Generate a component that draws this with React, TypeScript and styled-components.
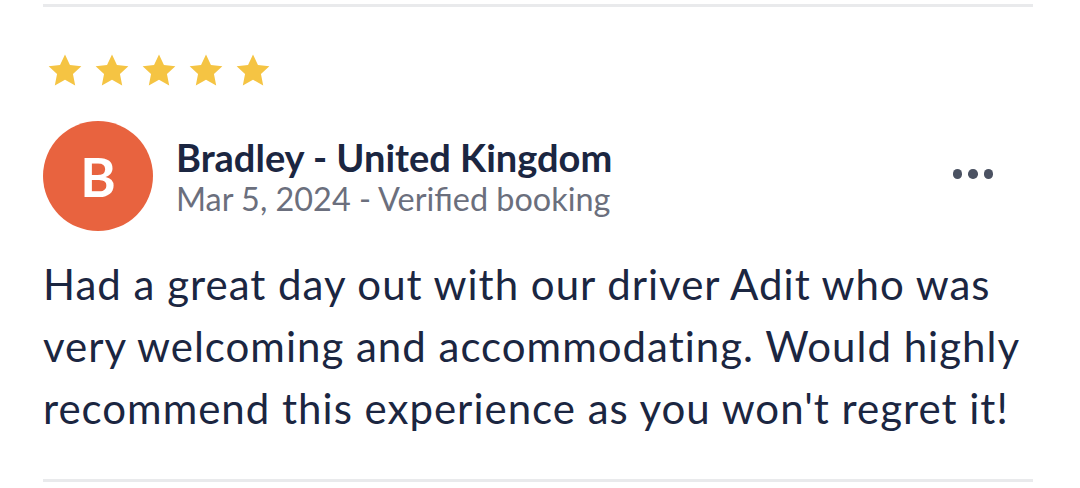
import styled, { createGlobalStyle } from "styled-components";

const GlobalStyle = createGlobalStyle`
  html, body {
    margin: 0;
    padding: 0;
    background: #ffffff;
  }
  body {
    font-family: Lato, "Open Sans", "Liberation Sans", sans-serif;
  }
`;

const Review = styled.section`
  width: 1080px;
  height: 488px;
  box-sizing: border-box;
  padding: 4px 47px 0 43px;
  display: flex;
  flex-direction: column;
`;

const Divider = styled.hr<{ $top?: number }>`
  margin: ${(p) => p.$top ?? 0}px 0 0 0;
  border: none;
  height: 3px;
  background: #e9eaec;
`;

const Stars = styled.div`
  display: flex;
  gap: 11px;
  margin: 46px 0 0 4px;
`;

const Header = styled.div`
  display: flex;
  align-items: center;
  margin-top: 33px;
`;

const Avatar = styled.div`
  width: 110px;
  height: 110px;
  border-radius: 50%;
  background: #e8633f;
  color: #ffffff;
  display: flex;
  align-items: center;
  justify-content: center;
  font-weight: 700;
  font-size: 54px;
  flex-shrink: 0;
`;

const Meta = styled.div`
  display: flex;
  flex-direction: column;
  margin-left: 23px;
  flex: 1;
  margin-top: 2px;
`;

const Name = styled.div`
  font-size: 38px;
  font-weight: 700;
  color: #1b2641;
  line-height: 44px;
`;

const Sub = styled.div`
  font-size: 32.4px;
  color: #6b6f7d;
  line-height: 40px;
`;

const More = styled.button`
  border: none;
  background: none;
  padding: 0;
  display: flex;
  gap: 6px;
  align-self: center;
  margin: -4px 40px 0 0;
  span {
    width: 9.5px;
    height: 9.5px;
    border-radius: 50%;
    background: #4b5262;
  }
`;

const Body = styled.p`
  margin: 22px 0 0 0;
  font-size: 42px;
  letter-spacing: 1px;
  line-height: 62px;
  color: #1b2641;
`;

const Star = () => (
  <svg width="36" height="35" viewBox="0 0 24 23">
    <path
      d="M12 0.8l3.3 7 7.6 0.9-5.6 5.2 1.5 7.6L12 17.7l-6.8 3.8 1.5-7.6L1.1 8.7l7.6-0.9z"
      fill="#f5c443"
    />
  </svg>
);

export default function App() {
  return (
    <>
      <GlobalStyle />
      <Review>
        <Divider />
        <Stars>
          {[0, 1, 2, 3, 4].map((i) => (
            <Star key={i} />
          ))}
        </Stars>
        <Header>
          <Avatar>B</Avatar>
          <Meta>
            <Name>Bradley - United Kingdom</Name>
            <Sub>Mar 5, 2024 - Verified booking</Sub>
          </Meta>
          <More type="button" aria-label="More options">
            <span />
            <span />
            <span />
          </More>
        </Header>
        <Body>
          Had a great day out with our driver Adit who was very welcoming and
          accommodating. Would highly recommend this experience as you won't
          regret it!
        </Body>
        <Divider $top={40} />
      </Review>
    </>
  );
}
